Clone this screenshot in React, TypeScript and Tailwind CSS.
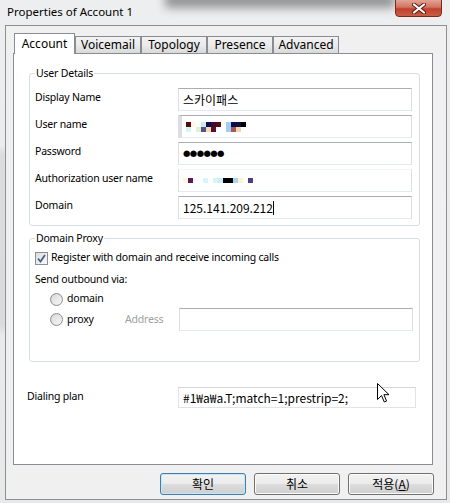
import React from "react";

const UF = "font-['Noto_Sans',sans-serif]";
const KF = "font-['Noto_Sans_CJK_KR',sans-serif]";

const userMosaic = [
  ["#5a0a0a", "#fdfbe2", "#ffffff", "#c6ecf6", "#0c0c52", "#3a0a30", "#5a0a12", "#ffffff", "#9ccff0", "#0a0a50", "#101040", "#000000"],
  ["#d4f4f8", "#ffffff", "#e2f0d4", "#52528c", "#f2dcb0", "#600a30", "#ffffff", "#ffffff", "#9ccff0", "#a05a5a", "#f2d4b0", "#ffffff"],
];
const authMosaic = [
  ["#fdf8dc", "#5a1a5a", "#ffffff", "#ffffff", "#d4f6f8", "#ffffff", "#d4f6f8", "#c8f0f4", "#000000", "#000000", "#a8d4ec", "#fbf4d4", "#ffffff", "#4c4088"],
];

function Mosaic({ rows }: { rows: string[][] }) {
  const w = rows[0].length * 5;
  const h = rows.length * 5;
  return (
    <svg width={w} height={h} viewBox={`0 0 ${w} ${h}`} shapeRendering="crispEdges">
      {rows.map((r, y) =>
        r.map((c, x) => <rect key={`${x}-${y}`} x={x * 5} y={y * 5} width={5} height={5} fill={c} />)
      )}
    </svg>
  );
}

function TextBox({ children, className = "" }: { children?: React.ReactNode; className?: string }) {
  return (
    <div
      className={`h-[23px] w-[234px] bg-white border border-[#dbdfe6] border-t-[#abadb3] border-b-[#e3e9ef] flex items-center pl-[4px] text-[12px] tracking-normal text-black ${className}`}
    >
      {children}
    </div>
  );
}

function Radio() {
  return (
    <span className="w-[13px] h-[13px] rounded-full border border-[#8e8f8f] bg-gradient-to-br from-[#cfcfcf] to-[#f5f5f5] flex items-center justify-center">
      <span className="w-[9px] h-[9px] rounded-full bg-gradient-to-br from-[#dcdcdc] to-[#f4f4f4]" />
    </span>
  );
}

function Tab({ label, active }: { label: string; active?: boolean }) {
  if (active) {
    return (
      <div className="relative z-10 h-[21px] w-[61px] -mb-[1px] bg-white border border-[#898c95] border-b-0 flex items-center justify-center text-[12px] text-black">
        {label}
      </div>
    );
  }
  return (
    <div className="h-[17px] self-end w-[66px] bg-gradient-to-b from-[#f2f2f2] via-[#ebebeb] to-[#d9d9d9] border border-[#898c95] border-b-0 flex items-center justify-center text-[12px] text-black">
      {label}
    </div>
  );
}

function Button({ label, primary }: { label: React.ReactNode; primary?: boolean }) {
  return (
    <div
      className={`w-[86px] h-[22px] rounded-[3px] border ${
        primary ? "border-[#3c7fb1] shadow-[inset_0_0_0_1px_#c7e6f7]" : "border-[#707070] shadow-[inset_0_0_0_1px_#fbfbfb]"
      } bg-[linear-gradient(#f2f2f2_0%,#ebebeb_50%,#dddddd_50%,#cfcfcf_100%)] flex items-center justify-center text-[12px] text-black ${KF}`}
    >
      {label}
    </div>
  );
}

export default function App() {
  return (
    <div className={`relative w-[450px] h-[503px] overflow-hidden bg-gradient-to-b from-[#eceef0] to-[#e6e8ea] ${UF}`}>
      <div className="absolute left-[165px] top-[-8px] w-[230px] h-[16px] bg-[#707070] blur-[5px] opacity-70" />
      <div className="absolute left-[0px] top-[150px] w-[4px] h-[180px] bg-[#b8b8b8] blur-[3px] opacity-70" />
      <div className="relative flex flex-col h-full">
        {/* title bar */}
        <div className="h-[25px] flex items-start justify-between">
          <span className="pl-[7px] pt-[4px] text-[11.5px] leading-[16px] text-black">Properties of Account 1</span>
          <div className="mr-[8px] w-[47px] h-[18px] -mt-[1px] rounded-b-[4px] border border-[#7a2a1c] bg-[linear-gradient(#e3a494_0%,#d0735f_45%,#c1412d_55%,#c95d45_100%)] flex items-center justify-center">
            <svg width="14" height="11" viewBox="0 0 14 11">
              <path d="M2 1.5 L12 9.5 M12 1.5 L2 9.5" stroke="#5a1a10" strokeWidth="4" strokeLinecap="round" />
              <path d="M2 1.5 L12 9.5 M12 1.5 L2 9.5" stroke="#ffffff" strokeWidth="2.2" strokeLinecap="round" />
            </svg>
          </div>
        </div>

        {/* client area */}
        <div className="ml-[5px] w-[442px] h-[475px] border border-[#8e8f8f] bg-[#f0f0f0] flex flex-col">
          {/* tabs */}
          <div className="flex items-end ml-[8px] mt-[6px] h-[21px]">
            <Tab label="Account" active />
            <Tab label="Voicemail" />
            <Tab label="Topology" />
            <Tab label="Presence" />
            <Tab label="Advanced" />
          </div>

          {/* panel */}
          <div className="ml-[7px] w-[420px] h-[412px] bg-white border border-[#898c95] flex flex-col text-[10.5px] tracking-[-0.2px] text-black">
            <fieldset className="ml-[15px] mt-[11px] w-[391px] border border-[#d5dfe5] rounded-[3px]">
              <legend className="ml-[5px] px-[1px] leading-[16px]">User Details</legend>
              <div className="flex flex-col gap-[4px] pt-[7px] pb-[6px] pl-[5px]">
                <div className="flex items-center">
                  <span className="w-[143px] -mt-[3px]">Display Name</span>
                  <TextBox className={KF}>스카이패스</TextBox>
                </div>
                <div className="flex items-center">
                  <span className="w-[143px] -mt-[3px]">User name</span>
                  <TextBox className="border-l-[4px] border-l-[#dcdce4] pl-[1px]">
                    <Mosaic rows={userMosaic} />
                  </TextBox>
                </div>
                <div className="flex items-center">
                  <span className="w-[143px] -mt-[3px]">Password</span>
                  <TextBox>
                    <span className="text-[8.5px] tracking-[-0.6px] font-['DejaVu_Sans',sans-serif]">●●●●●●</span>
                  </TextBox>
                </div>
                <div className="flex items-center">
                  <span className="w-[143px] -mt-[3px]">Authorization user name</span>
                  <TextBox className="pl-[2px] border-t-[#f4f5f7]">
                    <Mosaic rows={authMosaic} />
                  </TextBox>
                </div>
                <div className="flex items-center">
                  <span className="w-[143px] -mt-[3px]">Domain</span>
                  <TextBox className={`${KF} border-[#7eb4ea] border-t-[#569de5]`}>
                    <span>125.141.209.212</span>
                    <span className="w-[1px] h-[14px] bg-black" />
                  </TextBox>
                </div>
              </div>
            </fieldset>

            <fieldset className="ml-[15px] mt-[4px] w-[391px] border border-[#d5dfe5] rounded-[3px]">
              <legend className="ml-[5px] px-[1px] leading-[16px]">Domain Proxy</legend>
              <div className="flex flex-col pt-[4px] pb-[30px] pl-[5px]">
                <div className="flex items-center h-[16px] gap-[3px]">
                  <span className="w-[13px] h-[13px] border border-[#8e8f8f] bg-gradient-to-br from-[#dcdcdc] to-[#fafafa] flex items-center justify-center">
                    <svg width="9" height="9" viewBox="0 0 9 9">
                      <path d="M1 4.5 L3.5 7.5 L8 1" fill="none" stroke="#4a5f8a" strokeWidth="1.8" />
                    </svg>
                  </span>
                  <span>Register with domain and receive incoming calls</span>
                </div>
                <div className="flex items-center h-[16px] mt-[6px]">Send outbound via:</div>
                <div className="flex items-center h-[16px] mt-[3px] pl-[15px] gap-[4px]">
                  <Radio />
                  <span>domain</span>
                </div>
                <div className="flex items-center h-[23px] mt-[1px] pl-[15px]">
                  <Radio />
                  <span className="ml-[4px] w-[58px]">proxy</span>
                  <span className="w-[54px] text-[#a0a0a0]">Address</span>
                  <TextBox />
                </div>
              </div>
            </fieldset>

            <div className="flex items-center mt-[25px] pl-[13px]">
              <span className="w-[151px] -mt-[1px]">Dialing plan</span>
              <div className={`h-[21px] w-[238px] border border-[#e2e3ea] border-t-[#d5d6dc] flex items-center pl-[4px] text-[12px] tracking-normal ${KF}`}>
                #1₩a₩a.T;match=1;prestrip=2;
              </div>
            </div>
          </div>

          {/* buttons */}
          <div className="flex justify-end gap-[8px] mt-[8px] pr-[12px]">
            <Button label="확인" primary />
            <Button label="취소" />
            <Button
              label={
                <span>
                  적용(<span className="underline">A</span>)
                </span>
              }
            />
          </div>
        </div>
      </div>

      {/* mouse cursor */}
      <svg className="absolute left-[377px] top-[383px]" width="13" height="21" viewBox="0 0 13 21">
        <path d="M0.5 0.5 L0.5 16.5 L4.5 12.5 L7.3 19 L9.6 18 L6.9 11.7 L12 11.7 Z" fill="#ffffff" stroke="#000000" strokeWidth="1" strokeLinejoin="miter" />
      </svg>
    </div>
  );
}
